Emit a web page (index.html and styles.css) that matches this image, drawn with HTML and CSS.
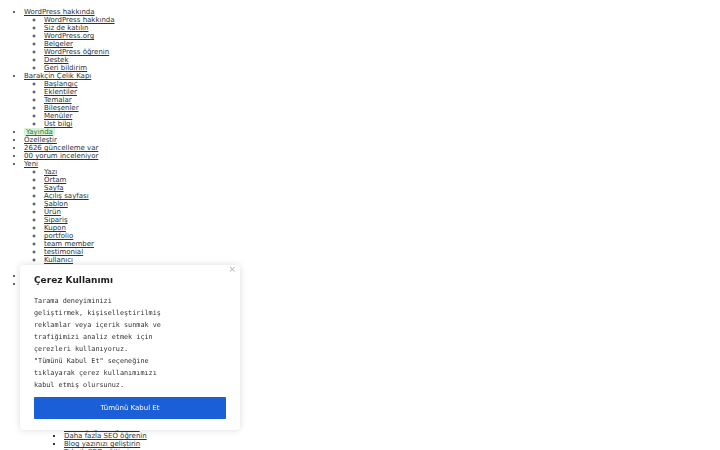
FILE: index.html
```html
<!DOCTYPE html>
<html lang="tr">
<head>
  <meta charset="UTF-8" />
  <title>Barakçin Çelik Kapı</title>
  <link rel="stylesheet" href="styles.css">
</head>
<body>
  <ul class="bar">
    <li><a href="#">WordPress hakkında</a>
      <ul>
        <li><a href="#">WordPress hakkında</a></li>
        <li><a href="#">Siz de katılın</a></li>
        <li><a href="#">WordPress.org</a></li>
        <li><a href="#">Belgeler</a></li>
        <li><a href="#">WordPress öğrenin</a></li>
        <li><a href="#">Destek</a></li>
        <li><a href="#">Geri bildirim</a></li>
      </ul>
    </li>
    <li><a href="#">Barakçin Çelik Kapı</a>
      <ul>
        <li><a href="#">Başlangıç</a></li>
        <li><a href="#">Eklentiler</a></li>
        <li><a href="#">Temalar</a></li>
        <li><a href="#">Bileşenler</a></li>
        <li><a href="#">Menüler</a></li>
        <li><a href="#">Üst bilgi</a></li>
      </ul>
    </li>
    <li><a href="#" class="live">Yayında</a></li>
    <li><a href="#">Özelleştir</a></li>
    <li><a href="#">2626 güncelleme var</a></li>
    <li><a href="#">00 yorum inceleniyor</a></li>
    <li><a href="#">Yeni</a>
      <ul>
        <li><a href="#">Yazı</a></li>
        <li><a href="#">Ortam</a></li>
        <li><a href="#">Sayfa</a></li>
        <li><a href="#">Açılış sayfası</a></li>
        <li><a href="#">Şablon</a></li>
        <li><a href="#">Ürün</a></li>
        <li><a href="#">Sipariş</a></li>
        <li><a href="#">Kupon</a></li>
        <li><a href="#">portfolio</a></li>
        <li><a href="#">team member</a></li>
        <li><a href="#">testimonial</a></li>
        <li><a href="#">Kullanıcı</a></li>
      </ul>
    </li>
  </ul>

  <ul class="bar secondary">
    <li><a href="#">Ara</a></li>
    <li><a href="#">Yoast SEO</a>
      <ul>
        <li><a href="#">Odak anahtar kelime</a></li>
        <li><a href="#">Okunabilirlik</a></li>
        <li><a href="#">Ön izleme</a></li>
        <li><a href="#">Bu sayfayı analiz et</a></li>
        <li><a href="#">Google Arama Konsolu</a></li>
        <li><a href="#">Bağlantılar</a></li>
        <li><a href="#">Yapılandırılmış veri</a></li>
        <li><a href="#">Sosyal medya</a></li>
        <li><a href="#">Sayfa hızı</a></li>
        <li><a href="#">Mobil uyumluluk</a></li>
        <li><a href="#">HTML doğrulama</a></li>
        <li><a href="#">CSS doğrulama</a></li>
        <li><a href="#">Anahtar kelime araştırması</a></li>
        <li><a href="#">Rakip analizi</a></li>
        <li><a href="#">Ayarlar</a></li>
        <li><a href="#">Araçlar</a></li>
        <li><a href="#">SEO öğrenin</a>
          <ul>
            <li><a href="#">Yoast çağında gezinin</a></li>
            <li><a href="#">Daha fazla SEO öğrenin</a></li>
            <li><a href="#">Blog yazınızı geliştirin</a></li>
            <li><a href="#">Teknik SEO eğitimi</a></li>
          </ul>
        </li>
      </ul>
    </li>
  </ul>

  <div class="cookie">
    <span class="close">×</span>
    <h3 class="cookie-title">Çerez Kullanımı</h3>
    <p class="cookie-text">Tarama deneyiminizi<br>geliştirmek, kişiselleştirilmiş<br>reklamlar veya içerik sunmak ve<br>trafiğimizi analiz etmek için<br>çerezleri kullanıyoruz.<br>"Tümünü Kabul Et" seçeneğine<br>tıklayarak çerez kullanımımızı<br>kabul etmiş olursunuz.</p>
    <button class="accept">Tümünü Kabul Et</button>
  </div>
</body>
</html>
```

FILE: styles.css
```css
body { margin: 0; padding: 8px 4px 0; font-family: "DejaVu Sans", sans-serif; font-size: 7px; line-height: 8px; color: #2c3338; background: #fff; }
ul { margin: 0; padding-left: 20px; }
ul ul { list-style-type: circle; }
ul ul ul { list-style-type: square; }
.secondary { margin-top: 8px; }
a { color: #2c3338; text-decoration: underline; }
.live { color: #1d7a34; background: #daf1dd; padding: 0 2px; }

.cookie { position: fixed; left: 20px; top: 265px; width: 192px; padding: 8px 14px 11px; background: #fff; border-radius: 4px; box-shadow: 0 0 7px rgba(0, 0, 0, 0.14); }
.close { position: absolute; right: 4px; top: 0; font-size: 9px; line-height: 9px; color: #b0b0b0; }
.cookie-title { margin: 0 0 8px; font-size: 9px; line-height: 14px; font-weight: bold; color: #1e1e1e; }
.cookie-text { margin: 0 0 6px; font-family: "DejaVu Sans Mono", monospace; font-size: 6.8px; line-height: 12px; color: #333; }
.accept { display: block; width: 100%; height: 22px; border: 0; border-radius: 1px; background: #1a5fd8; color: #fff; font-family: "DejaVu Sans", sans-serif; font-size: 7px; }
```
